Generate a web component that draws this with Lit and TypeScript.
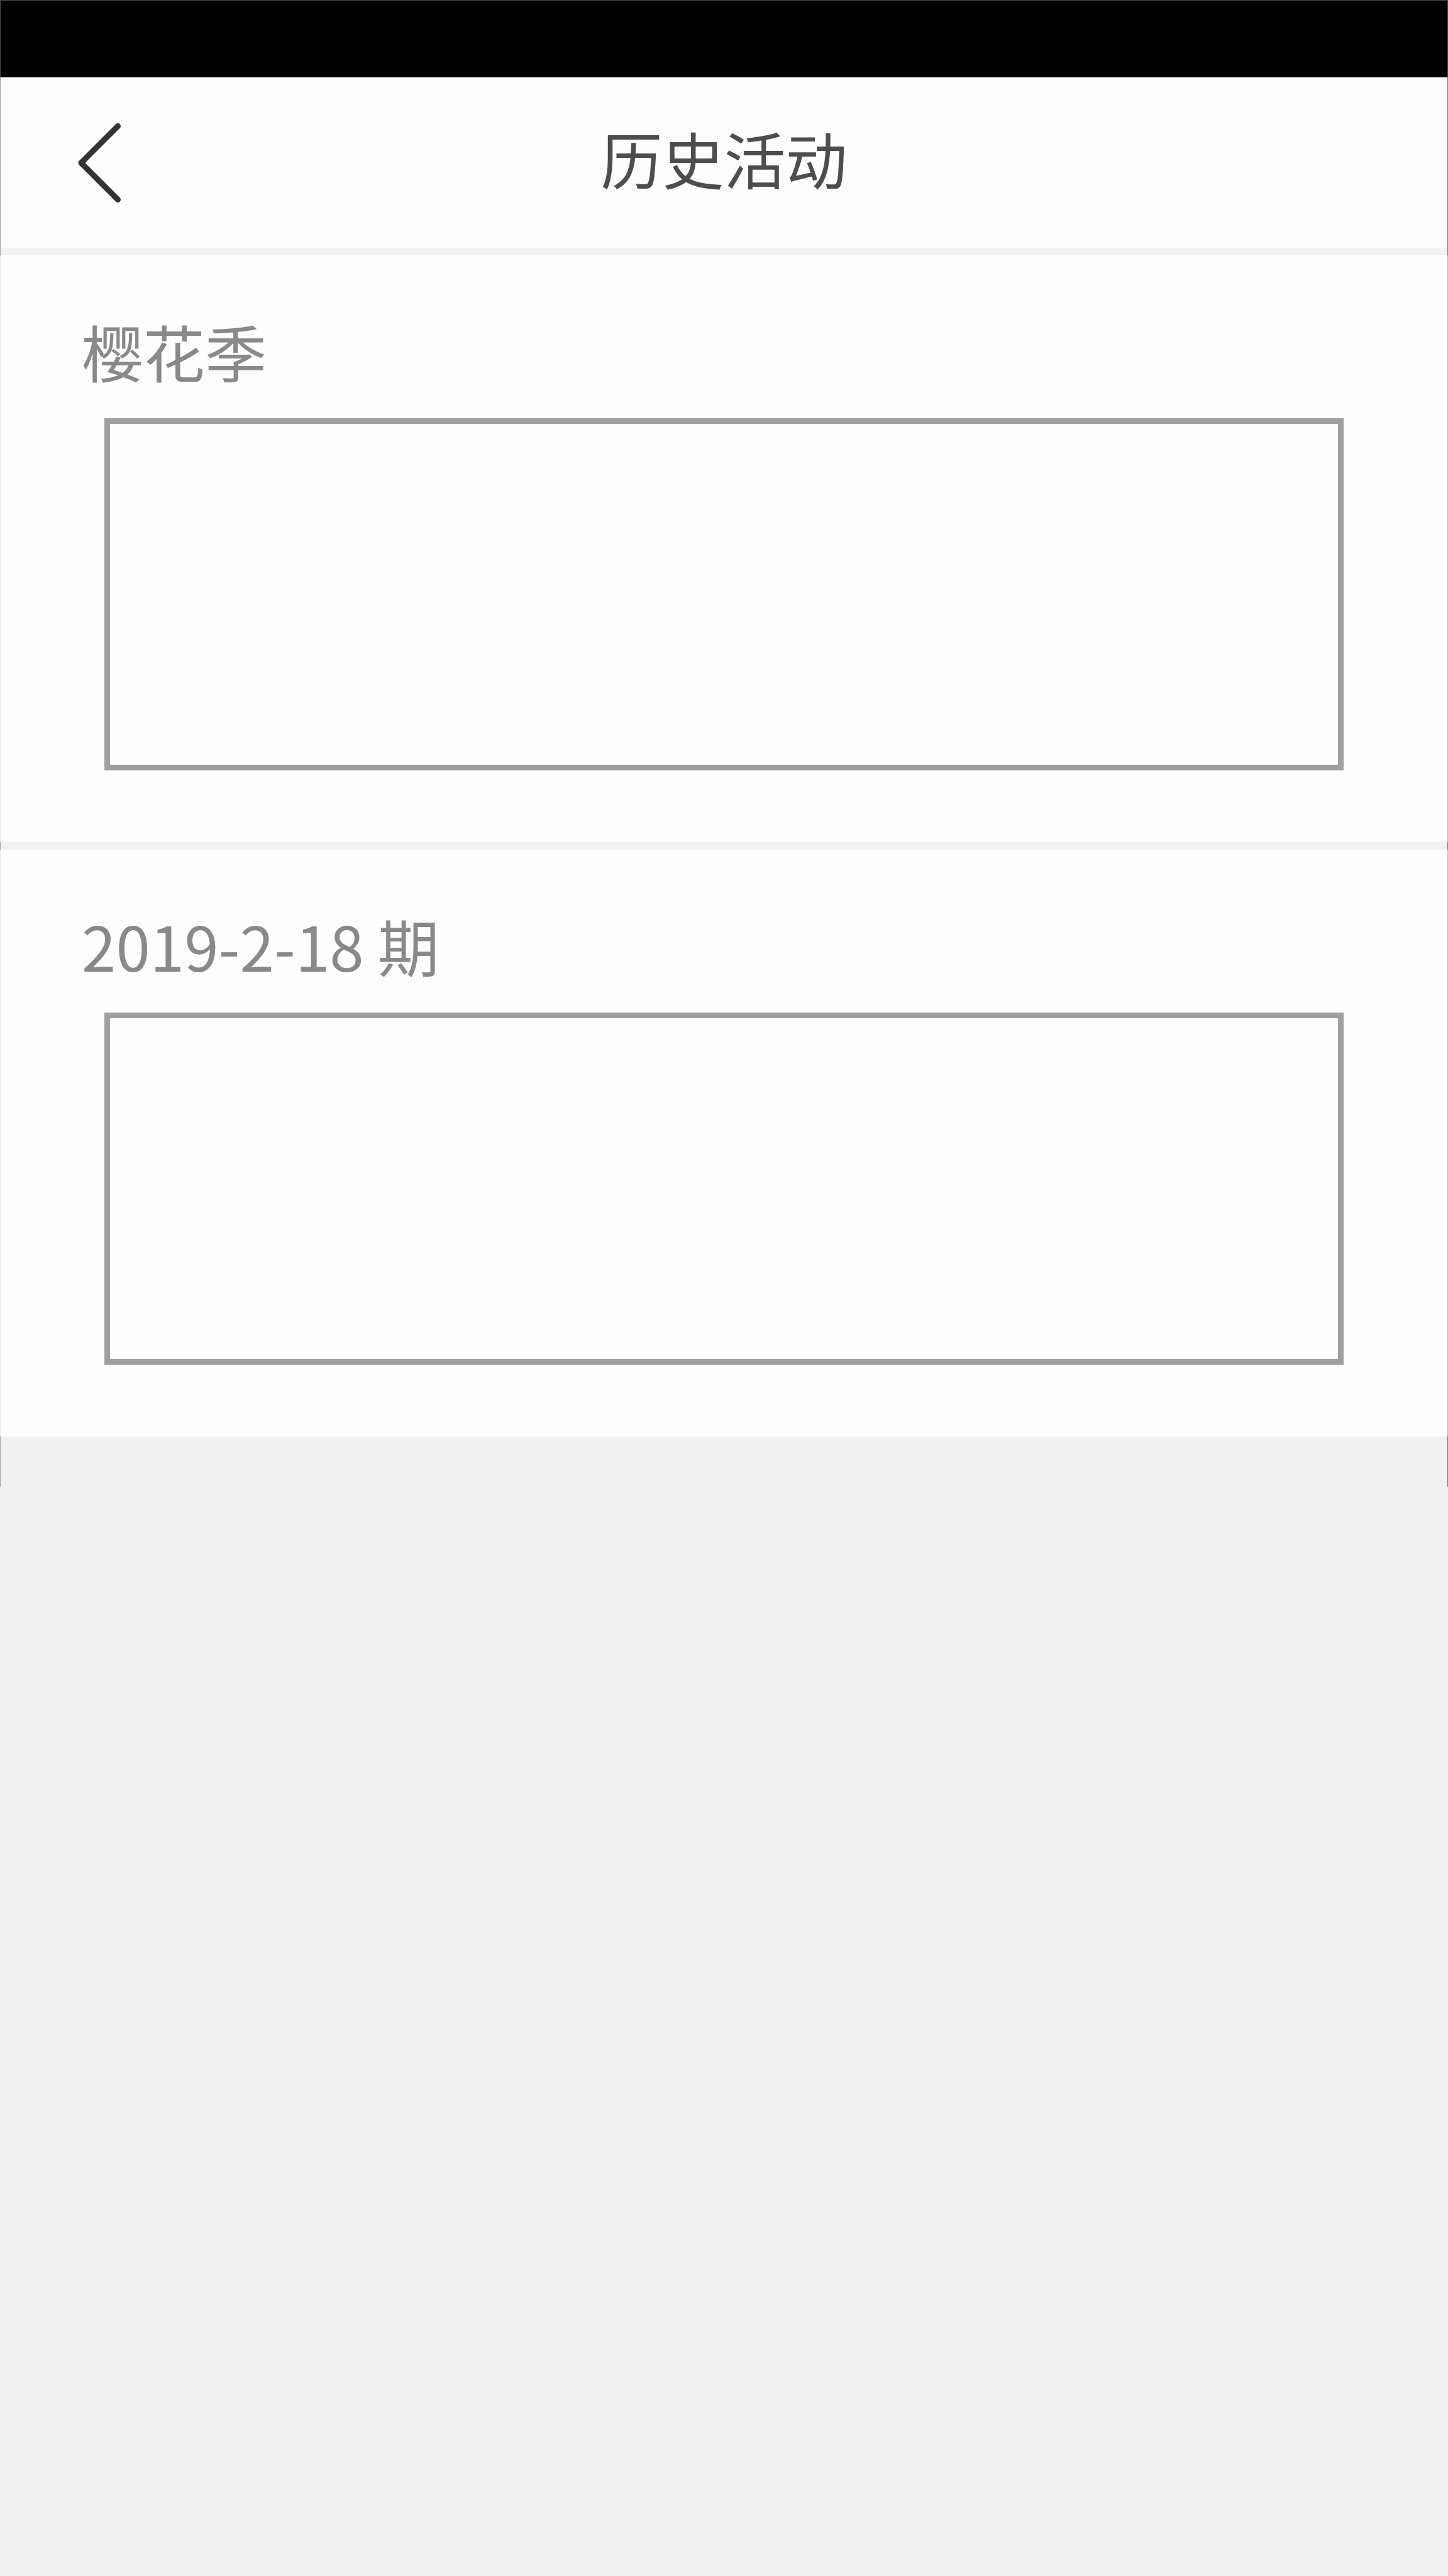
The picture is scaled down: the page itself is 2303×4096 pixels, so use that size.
import { LitElement, html, css } from "lit";
import { customElement, property } from "lit/decorators.js";

interface Activity {
  title: string;
}

const ACTIVITIES: Activity[] = [{ title: "樱花季" }, { title: "2019-2-18 期" }];

@customElement("activity-card")
export class ActivityCard extends LitElement {
  static styles = css`
    :host {
      display: block;
    }
    .card {
      box-sizing: border-box;
      padding: 81px 165px 114px;
      background: #fefefe;
      border-left: 1px solid #e8e8e8;
      border-right: 1px solid #b8b8b8;
    }
    .title {
      margin: 0 0 38px -36px;
      font-size: 98px;
      line-height: 140px;
      font-weight: 400;
      color: #898989;
    }
    .banner {
      box-sizing: border-box;
      height: 560px;
      border: 9px solid #9f9f9f;
    }
  `;

  @property() title = "";

  render() {
    return html`
      <article class="card">
        <h2 class="title">${this.title}</h2>
        <div class="banner"></div>
      </article>
    `;
  }
}

@customElement("app-root")
export class AppRoot extends LitElement {
  static styles = css`
    :host {
      display: block;
      min-height: 100vh;
      background: #f1f1f1;
      font-family: "Noto Sans CJK SC", sans-serif;
    }
    .status {
      box-sizing: border-box;
      height: 123px;
      background: #030000;
      border: 1px solid #4a4a4a;
      border-bottom: 0;
    }
    .header {
      box-sizing: border-box;
      display: grid;
      grid-template-columns: 1fr auto 1fr;
      align-items: center;
      height: 271px;
      padding: 0 123px;
      background: #fefefe;
      border-left: 1px solid #a2a2a2;
      border-right: 1px solid #747474;
    }
    .back {
      justify-self: start;
      display: block;
      padding: 0;
      border: 0;
      background: none;
      cursor: pointer;
    }
    .chevron {
      display: block;
      width: 68px;
      height: 126px;
    }
    .heading {
      margin: 0;
      padding-bottom: 18px;
      font-size: 98px;
      line-height: 140px;
      font-weight: 400;
      color: #4d4d4d;
    }
    .list {
      display: flex;
      flex-direction: column;
      gap: 12px;
      margin: 0;
      padding: 12px 0 80px;
      list-style: none;
      border-left: 1px solid #a2a2a2;
      border-right: 1px solid #747474;
    }
    .item {
      margin: 0 -1px;
    }
  `;

  render() {
    return html`
      <div class="status"></div>
      <header class="header">
        <button class="back" type="button" aria-label="返回">
          <svg class="chevron" viewBox="0 0 68 126" fill="none" aria-hidden="true">
            <path
              d="M63.5 4.5 5 63l58.5 58.5"
              stroke="#333"
              stroke-width="9"
              stroke-linecap="round"
              stroke-linejoin="round"
            />
          </svg>
        </button>
        <h1 class="heading">历史活动</h1>
      </header>
      <ul class="list">
        ${ACTIVITIES.map(
          (activity) => html`
            <li class="item"><activity-card .title=${activity.title}></activity-card></li>
          `,
        )}
      </ul>
    `;
  }
}
